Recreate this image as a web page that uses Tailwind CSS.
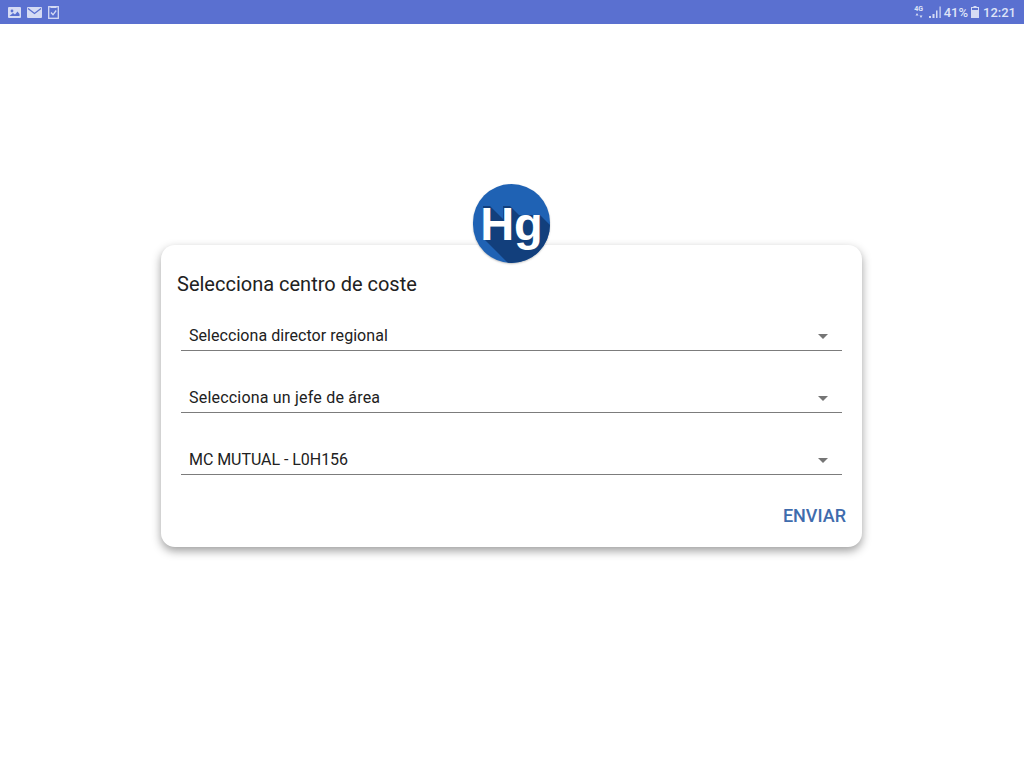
<!DOCTYPE html>
<html lang="es">
<head>
    <meta charset="UTF-8">
    <meta name="viewport" content="width=device-width, initial-scale=1.0">
    <title>Selecciona centro de coste</title>
    <script src="https://cdn.jsdelivr.net/npm/@tailwindcss/browser@4"></script>
</head>
<body class="bg-white h-[768px] overflow-hidden font-['Roboto',sans-serif]">

    <!-- status bar -->
    <div class="h-6 bg-[#5a70d0] flex items-center justify-between pl-2 pr-2 text-[#dfe4f7]">
        <div class="flex items-center gap-[6px]">
            <svg width="13" height="11" viewBox="0 0 13 11"><rect width="13" height="11" rx="1" fill="#d5dbf4"/><circle cx="4" cy="4" r="1.4" fill="#5a70d0"/><path d="M1.5 9 L5 6 L7 7.5 L9.5 4.5 L11.5 7 V9 Z" fill="#5a70d0"/></svg>
            <svg width="15" height="11" viewBox="0 0 15 11"><rect width="15" height="11" rx="1" fill="#d5dbf4"/><path d="M1 1.5 L7.5 6.5 L14 1.5" fill="none" stroke="#5a70d0" stroke-width="1.3"/></svg>
            <svg width="11" height="13" viewBox="0 0 11 13"><rect x="0.7" y="0.7" width="9.6" height="11.6" fill="none" stroke="#d5dbf4" stroke-width="1.3"/><rect x="2.5" y="0" width="6" height="2" fill="#d5dbf4"/><path d="M3 6.5 L5 8.8 L8.2 4.5" fill="none" stroke="#d5dbf4" stroke-width="1.3"/></svg>
        </div>
        <div class="flex items-center">
            <div class="w-[10px] mr-[5px] flex flex-col items-center leading-none">
                <span class="text-[7px] leading-[7px] font-bold">4G</span>
                <svg width="8" height="5" viewBox="0 0 8 5"><path d="M2 0 L3.5 2.5 H0.5 Z M6 5 L4.5 2.5 H7.5 Z" fill="#d5dbf4"/></svg>
            </div>
            <svg class="mr-[2px]" width="13" height="12" viewBox="0 0 13 12"><rect x="0" y="10" width="2" height="2" fill="#d5dbf4"/><rect x="3.5" y="8" width="2" height="4" fill="#d5dbf4"/><rect x="7" y="4.5" width="1.5" height="7.5" fill="#d5dbf4"/><rect x="10.5" y="0.5" width="1.2" height="11.5" fill="#d5dbf4"/></svg>
            <span class="text-[13px] font-medium leading-none mr-[3px]">41%</span>
            <svg class="mr-[4px]" width="8" height="12" viewBox="0 0 8 12"><rect x="2.5" y="0" width="3" height="1.5" fill="#d5dbf4"/><rect x="0.5" y="1.5" width="7" height="10" fill="none" stroke="#d5dbf4"/><rect x="1" y="4" width="6" height="7.5" fill="#d5dbf4"/></svg>
            <span class="text-[13px] font-medium leading-none">12:21</span>
        </div>
    </div>

    <!-- card -->
    <div class="relative w-[701px] h-[302px] mt-[221px] ml-[161px] bg-white rounded-[14px] shadow-[0_4px_10px_rgba(0,0,0,0.38)] pt-[26px] px-4">
        <div class="absolute left-[312px] top-[-61px] w-[77px] h-[79px] rounded-full overflow-hidden bg-[#1f62b4] flex items-center justify-center shadow-[0_1px_2px_rgba(0,0,0,0.25)]">
            <svg class="absolute inset-0" width="77" height="79" viewBox="0 0 77 79"><path d="M10 54 V22 H17 L30 35 V22 H37 L46 31 H67 L77 41 V79 H35 Z" fill="#123f7c"/></svg>
            <span class="relative text-white font-bold text-[47px] leading-none font-['Liberation_Sans',sans-serif] mt-[-1px]">Hg</span>
        </div>

        <h1 class="text-[20px] leading-[26px] text-[#212121]">Selecciona centro de coste</h1>

        <div class="mt-[17px] mx-1 flex flex-col gap-[25px]">
            <div class="h-[37px] pt-2 border-b border-[#7c7c7c] flex items-center justify-between pl-2 pr-[14px] text-base tracking-[0.05px] text-[#212121]">
                <span>Selecciona director regional</span>
                <span class="w-0 h-0 border-x-[5.5px] border-x-transparent border-t-[5px] border-t-[#757575]"></span>
            </div>
            <div class="h-[37px] pt-2 border-b border-[#7c7c7c] flex items-center justify-between pl-2 pr-[14px] text-base tracking-[0.2px] text-[#212121]">
                <span>Selecciona un jefe de área</span>
                <span class="w-0 h-0 border-x-[5.5px] border-x-transparent border-t-[5px] border-t-[#757575]"></span>
            </div>
            <div class="h-[37px] pt-2 border-b border-[#7c7c7c] flex items-center justify-between pl-2 pr-[14px] text-base tracking-[-0.05px] text-[#212121]">
                <span>MC MUTUAL - L0H156</span>
                <span class="w-0 h-0 border-x-[5.5px] border-x-transparent border-t-[5px] border-t-[#757575]"></span>
            </div>
        </div>

        <div class="mt-[30px] flex justify-end">
            <button class="text-[18px] leading-[22px] font-medium text-[#3f6cad]">ENVIAR</button>
        </div>
    </div>

</body>
</html>
